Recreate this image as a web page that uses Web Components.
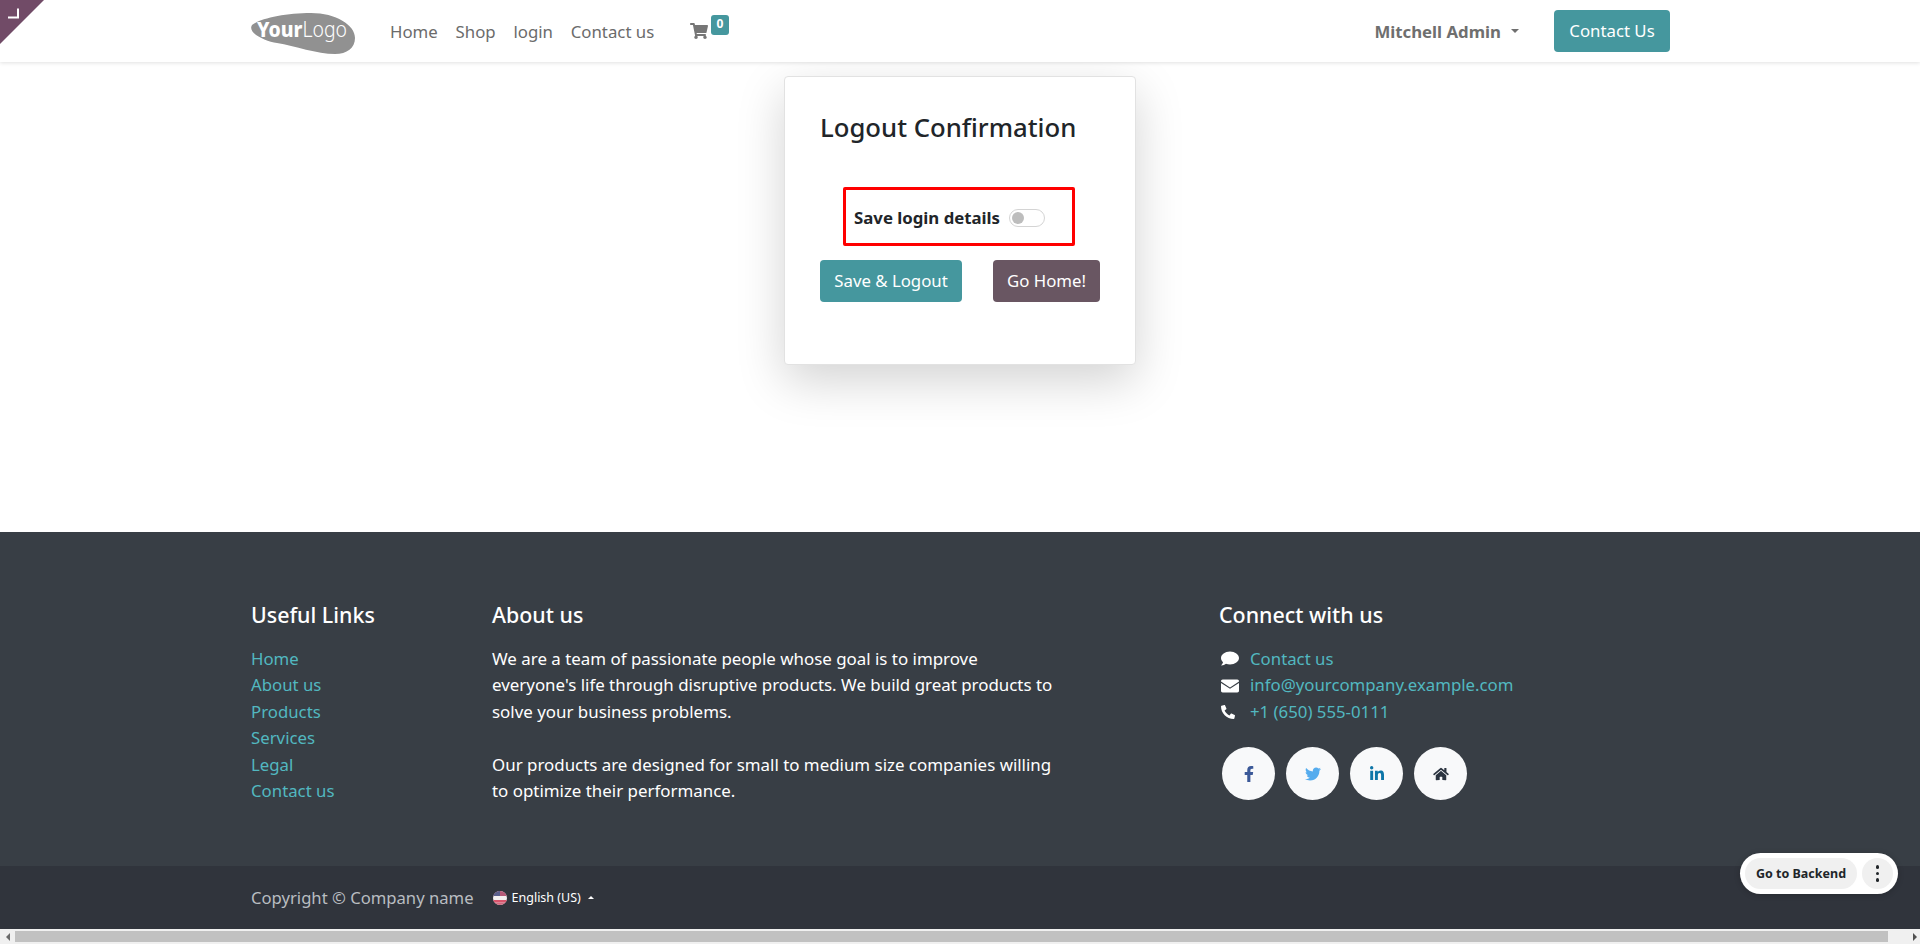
<!DOCTYPE html>
<html lang="en">
<head>
<meta charset="utf-8">
<title>Logout Confirmation</title>
<style>
  html, body { margin: 0; height: 944px; overflow: hidden; }
  body {
    display: flex;
    flex-direction: column;
    font-family: "Noto Sans", "Open Sans", sans-serif;
    font-size: 16.8px;
    color: #212529;
    background: #fff;
  }
</style>
</head>
<body>
  <corner-ribbon></corner-ribbon>
  <site-navbar></site-navbar>
  <logout-panel></logout-panel>
  <site-footer></site-footer>
  <copyright-bar></copyright-bar>
  <page-scrollbar></page-scrollbar>
  <backend-pill></backend-pill>

<script>
// small base class, every element just declares its own html + css
class ShadowBox extends HTMLElement {
  constructor() {
    super();
    this.attachShadow({ mode: 'open' });
    const tpl = document.createElement('template');
    tpl.innerHTML = this.constructor.markup;
    this.shadowRoot.appendChild(tpl.content.cloneNode(true));
  }
}

const icons = {
  cart: ['0 0 576 512', 'M528.12 301.319l47.273-208C578.806 78.301 567.391 64 551.99 64H159.208l-9.166-44.81C147.758 8.021 137.93 0 126.529 0H24C10.745 0 0 10.745 0 24v16c0 13.255 10.745 24 24 24h69.883l70.248 343.435C147.325 417.1 136 435.222 136 456c0 30.928 25.072 56 56 56s56-25.072 56-56c0-15.674-6.447-29.835-16.824-40h209.647C430.447 426.165 424 440.326 424 456c0 30.928 25.072 56 56 56s56-25.072 56-56c0-22.172-12.888-41.332-31.579-50.405l5.517-24.276c3.413-15.018-8.002-29.319-23.403-29.319H218.117l-6.545-32h293.145c11.206 0 20.92-7.754 23.403-18.681z'],
  comment: ['0 0 512 512', 'M256 40C115 40 0 124 0 228c0 45 22 87 58 119-8 30-26 58-50 85-4 5 0 12 6 11 48-6 92-24 128-50 35 11 74 17 114 17 141 0 256-80 256-182S397 40 256 40z'],
  envelope: ['0 0 512 512', 'M0 120c0-27 21-48 48-48h416c27 0 48 21 48 48v10L256 296 0 130zM0 168v224c0 27 21 48 48 48h416c27 0 48-21 48-48V168L256 334z'],
  phone: ['0 0 512 512', 'M18.6 24.6l104-24c11.3-2.6 22.9 3.3 27.5 13.9l48 112c4.2 9.8 1.4 21.3-6.9 28l-60.6 49.6c36 76.7 98.9 140.5 177.2 177.2l49.6-60.6c6.8-8.3 18.2-11.1 28-6.9l112 48c10.7 4.7 16.6 16.3 14 27.6l-24 104C484.9 504.2 475.3 512 464 512 207.9 512 0 304.5 0 48c0-11.2 7.7-20.9 18.6-23.4z'],
  facebook: ['0 0 320 512', 'M279.14 288l14.22-92.66h-88.91v-60.13c0-25.35 12.42-50.06 52.24-50.06h40.42V6.26S260.43 0 225.36 0c-73.22 0-121.08 44.38-121.08 124.72v70.62H22.89V288h81.39v224h100.17V288z'],
  twitter: ['0 0 512 512', 'M459.37 151.716c.325 4.548.325 9.097.325 13.645 0 138.72-105.583 298.558-298.558 298.558-59.452 0-114.68-17.219-161.137-47.106 8.447.974 16.568 1.299 25.34 1.299 49.055 0 94.213-16.568 130.274-44.832-46.132-.975-84.792-31.188-98.112-72.772 6.498.974 12.995 1.624 19.818 1.624 9.421 0 18.843-1.3 27.614-3.573-48.081-9.747-84.143-51.98-84.143-102.985v-1.299c13.969 7.797 30.214 12.67 47.431 13.319-28.264-18.843-46.781-51.005-46.781-87.391 0-19.492 5.197-37.36 14.294-52.954 51.655 63.675 129.3 105.258 216.365 109.807-1.624-7.797-2.599-15.918-2.599-24.04 0-57.828 46.782-104.934 104.934-104.934 30.213 0 57.502 12.67 76.67 33.137 23.715-4.548 46.456-13.32 66.599-25.34-7.798 24.366-24.366 44.833-46.132 57.827 21.117-2.273 41.584-8.122 60.426-16.243-14.292 20.791-32.161 39.308-52.628 54.253z'],
  linkedin: ['0 0 448 512', 'M100.28 448H7.4V148.9h92.88zM53.79 108.1C24.09 108.1 0 83.5 0 53.8a53.79 53.79 0 0 1 107.58 0c0 29.7-24.1 54.3-53.79 54.3zM447.9 448h-92.68V302.4c0-34.7-.7-79.2-48.29-79.2-48.29 0-55.69 37.7-55.69 76.7V448h-92.78V148.9h89.08v40.8h1.3c12.4-23.5 42.69-48.3 87.88-48.3 94 0 111.28 61.9 111.28 142.3V448z'],
  home: ['0 0 576 512', 'M280.37 148.26L96 300.11V464a16 16 0 0 0 16 16l112.06-.29a16 16 0 0 0 15.92-16V368a16 16 0 0 1 16-16h64a16 16 0 0 1 16 16v95.64a16 16 0 0 0 16 16.05L464 480a16 16 0 0 0 16-16V300L295.67 148.26a12.19 12.19 0 0 0-15.3 0zM571.6 251.47L488 182.56V44.05a12 12 0 0 0-12-12h-56a12 12 0 0 0-12 12v72.61L318.47 43a48 48 0 0 0-61 0L4.34 251.47a12 12 0 0 0-1.6 16.9l25.5 31A12 12 0 0 0 45.15 301l235.22-193.74a12.19 12.19 0 0 1 15.3 0L530.9 301a12 12 0 0 0 16.9-1.6l25.5-31a12 12 0 0 0-1.7-16.93z']
};
const icon = (name, w, h, color) =>
  `<svg width="${w}" height="${h}" viewBox="${icons[name][0]}" fill="${color}" aria-hidden="true"><path d="${icons[name][1]}"/></svg>`;

class CornerRibbon extends ShadowBox {
  static markup = `
    <style>
      :host { position: absolute; top: 0; left: 0; width: 44px; height: 44px; z-index: 5; display: block; }
      svg { display: block; }
    </style>
    <svg width="44" height="44" viewBox="0 0 44 44">
      <polygon points="0,0 44,0 0,44" fill="#714b67"/>
      <path d="M18 8.5v9h-10" fill="none" stroke="#fff" stroke-width="2"/>
    </svg>`;
}

class SiteNavbar extends ShadowBox {
  static markup = `
    <style>
      :host {
        display: flex;
        align-items: center;
        flex: none;
        height: 62px;
        box-sizing: border-box;
        padding: 0 250px 0 251px;
        background: #fff;
        box-shadow: 0 1px 4px rgba(0,0,0,.12);
        position: relative;
        z-index: 2;
      }
      .logo { display: block; margin: 6px 35px 0 0; }
      nav { display: flex; }
      a { color: #6b6b6b; white-space: nowrap; }
      nav a { margin-right: 17.8px; }
      .cart { position: relative; display: flex; margin-left: 18px; }
      .badge {
        position: absolute; left: 21px; top: -8px;
        width: 18px; height: 20px; border-radius: 3px;
        background: #45979e; color: #fff;
        font-size: 12px; font-weight: 700; line-height: 18px; text-align: center;
      }
      .spacer { flex: 1; }
      .user { font-weight: 700; color: #6f6f6f; margin-right: 35px; display: flex; align-items: center; gap: 10px; }
      .caret { width: 0; height: 0; border: 4.5px solid transparent; border-top-color: #6f6f6f; border-bottom: 0; }
      .contact {
        display: block; box-sizing: border-box; width: 116px; height: 42px;
        border-radius: 4px; background: #45979e; color: #fff;
        line-height: 42px; text-align: center;
      }
    </style>
    <svg class="logo" width="104" height="42" viewBox="0 0 104 42">
      <path d="M1 12C10 5 35 0 60 0c25 0 44 12 44 25 0 10-8 16-20 16-18 0-40-8-58-11C14 28-4 20 1 12z" fill="#919191"/>
      <text x="6" y="24" font-family="Noto Sans, sans-serif" font-size="21" textLength="90" lengthAdjust="spacingAndGlyphs" fill="#fff"><tspan font-weight="800">Your</tspan><tspan font-weight="300">Logo</tspan></text>
    </svg>
    <nav><a>Home</a><a>Shop</a><a>login</a><a>Contact us</a></nav>
    <span class="cart">${icon('cart', 18, 16, '#767676')}<span class="badge">0</span></span>
    <span class="spacer"></span>
    <a class="user">Mitchell Admin <span class="caret"></span></a>
    <a class="contact">Contact Us</a>`;
}

class ToggleSwitch extends ShadowBox {
  static markup = `
    <style>
      :host {
        display: inline-block; box-sizing: border-box; width: 36px; height: 18px;
        border: 1px solid #d4d4d4; border-radius: 9px; background: #fff; position: relative;
      }
      i { display: block; width: 12px; height: 12px; margin: 2px 0 0 2px; border-radius: 50%; background: #bdbdbd; }
    </style>
    <i></i>`;
}

class ActionButton extends ShadowBox {
  static markup = `
    <style>
      :host {
        display: block; box-sizing: border-box; height: 42px; border-radius: 4px;
        background: var(--btn-bg, #45979e); color: #fff;
        line-height: 42px; text-align: center; white-space: nowrap;
      }
    </style>
    <slot></slot>`;
}

class LogoutPanel extends ShadowBox {
  static markup = `
    <style>
      :host {
        display: flex; justify-content: center; align-items: flex-start;
        flex: none; height: 470px; box-sizing: border-box; padding-top: 14px;
      }
      .card {
        box-sizing: border-box; width: 352px; height: 289px;
        border: 1px solid #e2e2e2; border-radius: 4px; background: #fff;
        box-shadow: 0 16px 48px rgba(0,0,0,.175);
        padding: 33px 35px 0;
      }
      h1 { margin: 0; font-size: 25.7px; font-weight: 500; line-height: 36px; white-space: nowrap; }
      .mark {
        display: flex; align-items: center; gap: 9px;
        box-sizing: border-box; width: 232px; height: 59px;
        margin: 41px 0 0 23px; padding: 2px 0 0 8px;
        border: 3px solid #f00; border-radius: 2px;
        font-weight: 700; white-space: nowrap;
      }
      .buttons { display: flex; gap: 31px; margin-top: 14px; }
      .save { width: 142px; }
      .home { width: 107px; --btn-bg: #695662; }
    </style>
    <div class="card">
      <h1>Logout Confirmation</h1>
      <div class="mark">Save login details <toggle-switch></toggle-switch></div>
      <div class="buttons">
        <action-button class="save">Save &amp; Logout</action-button>
        <action-button class="home">Go Home!</action-button>
      </div>
    </div>`;
}

class SiteFooter extends ShadowBox {
  static markup = `
    <style>
      :host {
        display: grid; grid-template-columns: 241px 727px 1fr;
        flex: none; height: 334px; box-sizing: border-box;
        padding: 68px 0 0 251px;
        background: #383e45; color: #fff; line-height: 26.4px;
      }
      h2 { margin: 0 0 16px; font-size: 21.4px; font-weight: 500; line-height: 30px; white-space: nowrap; }
      a { color: #52b8c0; display: block; white-space: nowrap; }
      p { margin: 0 0 26.4px; white-space: nowrap; font-size: 16.9px; }
      .row { display: flex; align-items: center; }
      .row span { width: 31px; display: flex; padding-left: 2px; box-sizing: border-box; }
      .social { display: flex; gap: 11px; margin: 22px 0 0 3px; }
      .social span {
        width: 53px; height: 53px; border-radius: 50%; background: #f8f9fa;
        display: flex; align-items: center; justify-content: center;
      }
    </style>
    <div>
      <h2>Useful Links</h2>
      <a>Home</a><a>About us</a><a>Products</a><a>Services</a><a>Legal</a><a>Contact us</a>
    </div>
    <div>
      <h2>About us</h2>
      <p>We are a team of passionate people whose goal is to improve<br>everyone's life through disruptive products. We build great products to<br>solve your business problems.</p>
      <p>Our products are designed for small to medium size companies willing<br>to optimize their performance.</p>
    </div>
    <div>
      <h2>Connect with us</h2>
      <div class="row"><span>${icon('comment', 18, 18, '#fff')}</span><a>Contact us</a></div>
      <div class="row"><span>${icon('envelope', 18, 18, '#fff')}</span><a>info@yourcompany.example.com</a></div>
      <div class="row"><span>${icon('phone', 14, 14, '#fff')}</span><a>+1 (650) 555-0111</a></div>
      <div class="social">
        <span>${icon('facebook', 10, 16, '#3b5998')}</span>
        <span>${icon('twitter', 16, 16, '#55acee')}</span>
        <span>${icon('linkedin', 14, 16, '#0e76a8')}</span>
        <span>${icon('home', 16, 14, '#2b3440')}</span>
      </div>
    </div>`;
}

class CopyrightBar extends ShadowBox {
  static markup = `
    <style>
      :host {
        display: flex; align-items: center; flex: none;
        height: 63px; box-sizing: border-box; padding-left: 251px;
        background: #30343c; color: #b9bdc1; white-space: nowrap; font-size: 16.65px;
      }
      .lang { display: flex; align-items: center; margin-left: 19px; color: #fff; font-size: 12.5px; }
      svg { display: block; margin-right: 5px; }
      .caret { margin-left: 7px; width: 0; height: 0; border: 3px solid transparent; border-bottom-color: #fff; border-top: 0; }
    </style>
    <span>Copyright © Company name</span>
    <span class="lang">
      <svg width="14" height="14" viewBox="0 0 14 14">
        <clipPath id="c"><circle cx="7" cy="7" r="7"/></clipPath>
        <g clip-path="url(#c)">
          <rect width="14" height="14" fill="#f4f0f0"/>
          <rect width="14" height="5" fill="#b55a78"/>
          <rect y="9" width="14" height="2.5" fill="#d9546c"/>
          <rect y="11.5" width="14" height="2.5" fill="#cf6a80"/>
          <rect width="7" height="5" fill="#5a5f8c"/>
        </g>
      </svg>
      English (US)<span class="caret"></span>
    </span>`;
}

// drawn as a normal bar at the end of the page, the page itself does not scroll
class PageScrollbar extends ShadowBox {
  static markup = `
    <style>
      :host { display: flex; align-items: center; flex: none; height: 15px; background: #f0f0f0; }
      .thumb { flex: 1; height: 11px; background: #c1c1c1; }
      .arrow { width: 15px; flex: none; display: flex; justify-content: center; }
      .arrow i { width: 0; height: 0; border: 4px solid transparent; border-left: 0; border-right: 4px solid #6a6a6a; }
      .arrow.r { width: 32px; justify-content: flex-end; padding-right: 3px; box-sizing: border-box; }
      .arrow.r i { border-right: 0; border-left: 4px solid #505050; }
    </style>
    <span class="arrow"><i></i></span>
    <span class="thumb"></span>
    <span class="arrow r"><i></i></span>`;
}

class BackendPill extends ShadowBox {
  static markup = `
    <style>
      :host {
        position: absolute; left: 1740px; top: 853px; z-index: 6;
        display: flex; gap: 5px; box-sizing: border-box; width: 158px; height: 41px;
        padding: 5px; border-radius: 21px; background: #fff;
        box-shadow: 0 1px 6px rgba(0,0,0,.2);
      }
      .go {
        flex: 1; height: 31px; border-radius: 16px; background: #f0f0f0;
        font-size: 12.5px; font-weight: 700; line-height: 31px; text-align: center; color: #212529; white-space: nowrap;
      }
      .more {
        width: 31px; height: 31px; border-radius: 50%; background: #f0f0f0;
        display: flex; flex-direction: column; align-items: center; justify-content: center; gap: 3px;
      }
      .more i { width: 3.5px; height: 3.5px; border-radius: 50%; background: #212529; }
    </style>
    <span class="go">Go to Backend</span>
    <span class="more"><i></i><i></i><i></i></span>`;
}

customElements.define('corner-ribbon', CornerRibbon);
customElements.define('site-navbar', SiteNavbar);
customElements.define('toggle-switch', ToggleSwitch);
customElements.define('action-button', ActionButton);
customElements.define('logout-panel', LogoutPanel);
customElements.define('site-footer', SiteFooter);
customElements.define('copyright-bar', CopyrightBar);
customElements.define('page-scrollbar', PageScrollbar);
customElements.define('backend-pill', BackendPill);
</script>
</body>
</html>
